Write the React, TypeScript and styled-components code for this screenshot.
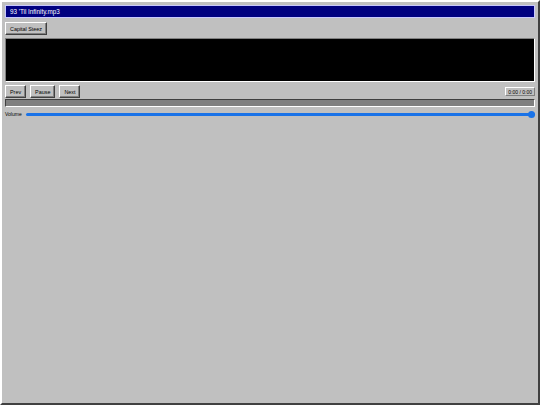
import styled, { createGlobalStyle } from 'styled-components';

const GlobalStyle = createGlobalStyle`
  html, body {
    margin: 0;
    padding: 0;
    background: #c0c0c0;
  }
  * {
    box-sizing: border-box;
  }
`;

const Window = styled.div`
  width: 540px;
  height: 405px;
  display: flex;
  flex-direction: column;
  padding: 3px;
  background: #c0c0c0;
  border: 2px solid;
  border-color: #ffffff #404040 #404040 #ffffff;
  font-family: 'Liberation Sans', Arial, sans-serif;
`;

const TitleBar = styled.div`
  height: 13px;
  flex: none;
  display: flex;
  align-items: center;
  padding-left: 4px;
  background: #000080;
  border: 1px solid #c8c8ff;
  color: #ffffff;
  font-size: 6.3px;
`;

const Toolbar = styled.div`
  display: flex;
  align-items: center;
  margin-top: 4px;
`;

const Button = styled.button`
  height: 13px;
  padding: 0 4px;
  font-family: inherit;
  font-size: 5.4px;
  color: #000000;
  background: #c0c0c0;
  border: 1px solid;
  border-color: #ffffff #404040 #404040 #ffffff;
  box-shadow: inset -1px -1px 0 #808080;
`;

const Screen = styled.div`
  height: 44px;
  flex: none;
  margin-top: 3px;
  background: #000000;
  border: 1px solid;
  border-color: #808080 #ffffff #ffffff #808080;
`;

const Controls = styled.div`
  display: flex;
  align-items: center;
  justify-content: space-between;
  margin-top: 3px;
`;

const ButtonGroup = styled.div`
  display: flex;
  gap: 4px;
`;

const TimeDisplay = styled.div`
  height: 9px;
  padding: 0 2px;
  display: flex;
  align-items: center;
  font-size: 5px;
  color: #000000;
  background: #c0c0c0;
  border: 1px solid;
  border-color: #ffffff #808080 #808080 #ffffff;
`;

const Progress = styled.div`
  height: 8px;
  flex: none;
  margin-top: 1px;
  background: #808080;
  border: 1px solid;
  border-color: #404040 #ffffff #ffffff #404040;
`;

const VolumeRow = styled.label`
  display: flex;
  align-items: center;
  gap: 4px;
  height: 10px;
  margin-top: 2px;
  font-size: 5px;
  color: #000000;
`;

const VolumeSlider = styled.input`
  flex: 1;
  height: 8px;
  margin: 0;
  appearance: none;
  background: transparent;

  &::-webkit-slider-runnable-track {
    height: 3px;
    border-radius: 2px;
    background: #1a73e8;
  }

  &::-webkit-slider-thumb {
    appearance: none;
    width: 7px;
    height: 7px;
    margin-top: -2px;
    border-radius: 50%;
    background: #1a73e8;
  }
`;

export default function App() {
  return (
    <>
      <GlobalStyle />
      <Window>
        <TitleBar>93 'Til Infinity.mp3</TitleBar>
        <Toolbar>
          <Button>Capital Steez</Button>
        </Toolbar>
        <Screen />
        <Controls>
          <ButtonGroup>
            <Button>Prev</Button>
            <Button>Pause</Button>
            <Button>Next</Button>
          </ButtonGroup>
          <TimeDisplay>0:00 / 0:00</TimeDisplay>
        </Controls>
        <Progress />
        <VolumeRow>
          Volume
          <VolumeSlider type="range" min={0} max={1} step={0.01} defaultValue={1} />
        </VolumeRow>
      </Window>
    </>
  );
}
